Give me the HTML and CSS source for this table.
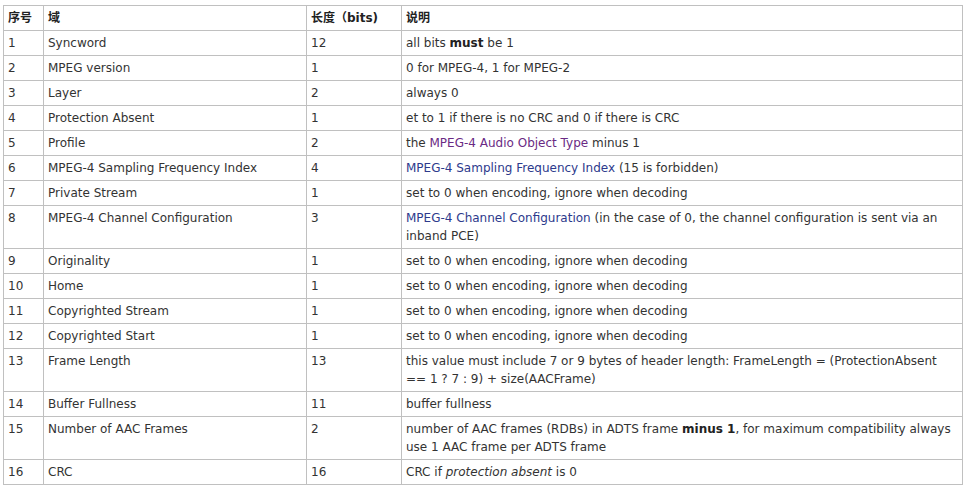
FILE: index.html
```html
<!DOCTYPE html>
<html lang="zh">
<head>
<meta charset="utf-8">
<title>ADTS header</title>
<link rel="stylesheet" href="styles.css">
</head>
<body>
<table class="spec">
  <colgroup>
    <col class="c-num">
    <col class="c-field">
    <col class="c-len">
    <col class="c-desc">
  </colgroup>
  <thead>
    <tr><th>序号</th><th>域</th><th>长度（bits)</th><th>说明</th></tr>
  </thead>
  <tbody>
    <tr><td>1</td><td>Syncword</td><td>12</td><td>all bits <b>must</b> be 1</td></tr>
    <tr><td>2</td><td>MPEG version</td><td>1</td><td>0 for MPEG-4, 1 for MPEG-2</td></tr>
    <tr><td>3</td><td>Layer</td><td>2</td><td>always 0</td></tr>
    <tr><td>4</td><td>Protection Absent</td><td>1</td><td>et to 1 if there is no CRC and 0 if there is CRC</td></tr>
    <tr><td>5</td><td>Profile</td><td>2</td><td>the <a class="visited" href="#">MPEG-4 Audio Object Type</a> minus 1</td></tr>
    <tr><td>6</td><td>MPEG-4 Sampling Frequency Index</td><td>4</td><td><a class="link" href="#">MPEG-4 Sampling Frequency Index</a> (15 is forbidden)</td></tr>
    <tr><td>7</td><td>Private Stream</td><td>1</td><td>set to 0 when encoding, ignore when decoding</td></tr>
    <tr><td>8</td><td>MPEG-4 Channel Configuration</td><td>3</td><td><a class="link" href="#">MPEG-4 Channel Configuration</a> (in the case of 0, the channel configuration is sent via an inband PCE)</td></tr>
    <tr><td>9</td><td>Originality</td><td>1</td><td>set to 0 when encoding, ignore when decoding</td></tr>
    <tr><td>10</td><td>Home</td><td>1</td><td>set to 0 when encoding, ignore when decoding</td></tr>
    <tr><td>11</td><td>Copyrighted Stream</td><td>1</td><td>set to 0 when encoding, ignore when decoding</td></tr>
    <tr><td>12</td><td>Copyrighted Start</td><td>1</td><td>set to 0 when encoding, ignore when decoding</td></tr>
    <tr><td>13</td><td>Frame Length</td><td>13</td><td>this value must include 7 or 9 bytes of header length: FrameLength = (ProtectionAbsent == 1 ? 7 : 9) + size(AACFrame)</td></tr>
    <tr><td>14</td><td>Buffer Fullness</td><td>11</td><td>buffer fullness</td></tr>
    <tr><td>15</td><td>Number of AAC Frames</td><td>2</td><td>number of AAC frames (RDBs) in ADTS frame <b>minus 1</b>, for maximum compatibility always use 1 AAC frame per ADTS frame</td></tr>
    <tr><td>16</td><td>CRC</td><td>16</td><td>CRC if <i>protection absent</i> is 0</td></tr>
  </tbody>
</table>
</body>
</html>
```
FILE: styles.css
```css
html, body {
  margin: 0;
  background: #fff;
}
body {
  padding: 5px 0 0 3px;
  font-family: "DejaVu Sans", Verdana, "Noto Sans CJK SC", sans-serif;
  font-size: 12px;
  line-height: 18px;
  color: #333;
}
.spec {
  border-collapse: collapse;
  table-layout: fixed;
  width: 959px;
}
.c-num { width: 40px; }
.c-field { width: 263px; }
.c-len { width: 95px; }
.c-desc { width: 561px; }
.spec th,
.spec td {
  border: 1px solid #c0c0c0;
  padding: 3px 4px;
  text-align: left;
  vertical-align: top;
}
.spec th {
  font-weight: bold;
  color: #222;
}
.spec b { color: #222; }
.spec a { text-decoration: none; }
.spec a.visited { color: #6a2a84; }
.spec a.link { color: #2d3a8c; }
```
